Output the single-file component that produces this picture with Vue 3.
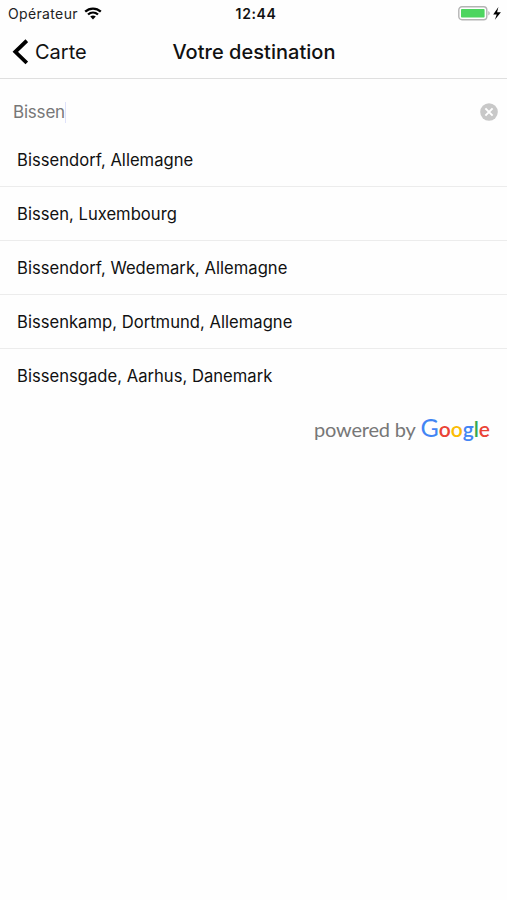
<template>
  <div class="screen">
    <div class="status-bar">
      <div class="carrier">
        <span>Opérateur</span>
        <svg class="wifi" viewBox="0 0 18 13" width="18" height="13">
          <path d="M1.2 4.7C5.7.6 12.3.6 16.8 4.7" />
          <path d="M4 7.5c2.9-2.6 7.1-2.6 10 0" />
          <path class="wifi-dot" d="M6.2 9.5c1.7-1.4 3.9-1.4 5.6 0L9 12.4z" />
        </svg>
      </div>
      <span class="time">12:44</span>
      <div class="battery">
        <svg viewBox="0 0 44 16" width="44" height="16">
          <rect class="shell" x="0.8" y="0.8" width="28" height="13" rx="3.2" />
          <rect class="level" x="3" y="3" width="23.6" height="8.6" rx="0.8" />
          <path class="tip" d="M30.4 5.1c1.7.7 1.7 3.7 0 4.4z" />
          <path class="bolt" d="M40.4 1 35.2 8.5h3.5L36.9 13.8l6-7.6h-3.8z" />
        </svg>
      </div>
    </div>

    <header class="nav">
      <button class="back-btn">
        <svg viewBox="0 0 16 26" width="16" height="26">
          <path d="M14.8 1.7 3.3 12.8l11.5 11.1" />
        </svg>
        <span>Carte</span>
      </button>
      <h1>Votre destination</h1>
    </header>

    <div class="search">
      <span class="query">{{ query }}</span>
      <span class="caret"></span>
      <button class="clear-btn" title="Effacer" @click="query = ''">
        <svg viewBox="0 0 18 18" width="18" height="18">
          <circle cx="9" cy="9" r="8.8" />
          <path d="M5.4 5.4l7.2 7.2M12.6 5.4l-7.2 7.2" />
        </svg>
      </button>
    </div>

    <ul class="results">
      <li v-for="place in places" :key="place">{{ place }}</li>
    </ul>

    <div class="powered">
      <span class="by">powered by</span>
      <span class="google"><span class="blue cap">G</span><span class="red">o</span><span class="yellow">o</span><span class="blue">g</span><span class="green">l</span><span class="red">e</span></span>
    </div>
  </div>
</template>

<script setup>
import { ref } from 'vue'

const query = ref('Bissen')
const places = [
  'Bissendorf, Allemagne',
  'Bissen, Luxembourg',
  'Bissendorf, Wedemark, Allemagne',
  'Bissenkamp, Dortmund, Allemagne',
  'Bissensgade, Aarhus, Danemark'
]
</script>

<style>
body {
  background: #fefefe;
}
</style>

<style scoped>
.screen {
  height: 900px;
  background: #fefefe;
  color: #111;
  font-family: Inter, 'Liberation Sans', sans-serif;
  overflow: hidden;
}

button {
  padding: 0;
  border: none;
  background: none;
  color: inherit;
  font-family: inherit;
  cursor: pointer;
}

svg {
  display: block;
}

.status-bar {
  display: grid;
  grid-template-columns: 1fr auto 1fr;
  align-items: center;
  height: 27px;
  padding: 0 5px 0 8px;
}

.carrier {
  display: flex;
  align-items: center;
  gap: 6px;
  font-size: 14px;
  letter-spacing: 0.35px;
  color: #222;
}

.wifi {
  fill: none;
  stroke: #000;
  stroke-width: 2.3;
}

.wifi-dot {
  fill: #000;
  stroke: none;
}

.time {
  padding-left: 2px;
  font-size: 14px;
  font-weight: 600;
  letter-spacing: 0.6px;
}

.battery {
  justify-self: end;
}

.shell {
  fill: #fff;
  stroke: #b4b4b4;
  stroke-width: 1.4;
}

.level {
  fill: #4cd55f;
}

.tip {
  fill: #aaa;
}

.bolt {
  fill: #000;
}

.nav {
  display: grid;
  grid-template-columns: 1fr auto 1fr;
  align-items: center;
  height: 50px;
  padding: 0 11px 1px 12px;
  border-bottom: 1px solid #dfdfdf;
}

.back-btn {
  display: flex;
  align-items: center;
  gap: 7px;
  font-size: 20px;
}

.back-btn path {
  fill: none;
  stroke: #000;
  stroke-width: 3.8;
}

h1 {
  margin: 0;
  font-size: 20px;
  font-weight: 500;
  letter-spacing: 0.03px;
}

.search {
  display: flex;
  align-items: center;
  height: 54px;
  padding: 12px 9px 0 13px;
  box-sizing: border-box;
  font-size: 17px;
  color: #777;
}

.query {
  letter-spacing: -0.2px;
}

.caret {
  width: 1px;
  height: 21px;
  background: #dfe2fa;
}

.clear-btn {
  margin-left: auto;
}

.clear-btn circle {
  fill: #c8c8c8;
}

.clear-btn path {
  stroke: #fff;
  stroke-width: 2;
}

.results {
  margin: 0;
  padding: 0;
  list-style: none;
}

.results li {
  display: flex;
  align-items: center;
  height: 54.1px;
  padding: 0 17px;
  box-sizing: border-box;
  border-bottom: 1px solid #ececec;
  font-size: 16.6px;
  letter-spacing: 0.02px;
}

.results li:last-child {
  border-bottom-color: transparent;
}

.powered {
  display: flex;
  justify-content: flex-end;
  align-items: baseline;
  gap: 5px;
  padding: 10.5px 17px 0 0;
  font-family: Lato, sans-serif;
  font-size: 20px;
  line-height: 26px;
  color: #777;
}

.by {
  letter-spacing: -0.2px;
}

.google {
  font-size: 21px;
  font-weight: 600;
}

.cap {
  font-size: 25px;
  font-weight: 400;
}

.blue {
  color: #4285f4;
}

.red {
  color: #ea4335;
}

.yellow {
  color: #fbbc05;
}

.green {
  color: #34a853;
}
</style>
